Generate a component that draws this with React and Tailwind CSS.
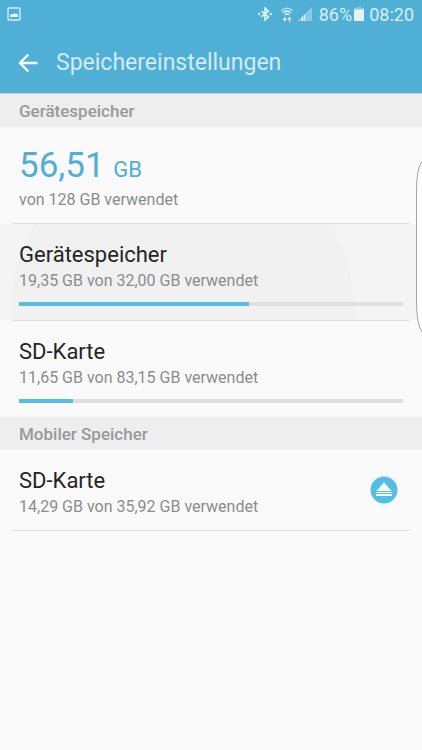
import { useState } from "react";

const INTERNAL = [
  { id: "device", name: "Gerätespeicher", detail: "19,35 GB von 32,00 GB verwendet", percent: 60 },
  { id: "sd", name: "SD-Karte", detail: "11,65 GB von 83,15 GB verwendet", percent: 14 },
];

const PictureIcon = () => (
  <svg width="14" height="14" viewBox="0 0 14 14" fill="none" aria-hidden="true">
    <rect x="1" y="1" width="12" height="12" rx="1" stroke="#d3ebf5" strokeWidth="1.4"/>
    <path d="M3 10V8l1.500-1 1 .5L7 6l1.500 1L10 6.500 11 8v2z" fill="#e6f4fa"/>
  </svg>
);

const BluetoothIcon = () => (
  <svg width="14" height="14" viewBox="0 0 14 14" fill="none" aria-hidden="true">
    <path d="M3.4 4.2l7 5.6L7 13V1l3.4 3.2-7 5.6" stroke="#e2f2f9" strokeWidth="1.6"/>
    <circle cx="1.2" cy="7" r="1.2" fill="#d8eef7"/>
    <circle cx="12.8" cy="7" r="1.2" fill="#d8eef7"/>
  </svg>
);

const WifiIcon = () => (
  <svg width="14" height="15" viewBox="0 0 14 15" fill="none" aria-hidden="true">
    <path d="M1.2 3.8Q7-1.4 12.8 3.8" stroke="#b4ddec" strokeWidth="1.4"/>
    <path d="M3 5.8Q7 2.4 11 5.8M4.9 7.8Q7 6.2 9.1 7.8" stroke="#e2f2f9" strokeWidth="1.6"/>
    <path d="M2.500 11.800h4.500L4.800 14.500zM4 10h1.600v2.500H4zM7.200 12.600h4.500l-2.200-2.800zM8.700 12h1.600v2.500H8.700z" fill="#e2f2f9"/>
  </svg>
);

const SignalIcon = () => (
  <svg width="14" height="14" viewBox="0 0 14 14" aria-hidden="true">
    <path d="M7 14V7l7-7v14z" fill="#8ccae3"/>
    <path d="M0 14l2-2v2zM3 14v-3l2-2v5zM5.500 14V8.500L7 7v7z" fill="#e2f2f9"/>
  </svg>
);

const BatteryIcon = () => (
  <svg width="10" height="14" viewBox="0 0 10 14" aria-hidden="true">
    <path d="M3 0h4v1h3v2H0V1h3z" fill="#8ccae3"/>
    <path d="M0 2.500h10V14H0z" fill="#e4f3f9"/>
  </svg>
);

const BackIcon = () => (
  <svg width="20" height="20" viewBox="0 0 20 20" fill="none" stroke="#fff" strokeWidth="2.4" aria-hidden="true">
    <path d="M10.300 1.500L2 10l8.300 8.500M2 10h17.500"/>
  </svg>
);

const EjectIcon = () => (
  <svg className="block" width="28" height="28" viewBox="0 0 28 28" aria-hidden="true">
    <circle cx="14" cy="14" r="13.500" fill="#54bfe4"/>
    <path d="M14 6.500l7.500 8.500h-15zM6 16h16v1H6zM6 18h16v2H6z" fill="#fff"/>
  </svg>
);

const SectionHeader = ({ children }) => (
  <h2 className="bg-[#eeeeee] px-[19px] pt-[5px] pb-1 text-[17px] leading-6 font-medium text-[#999999]">{children}</h2>
);

const Divider = () => <div className="mx-3 h-px bg-[#e0e0e0]"/>;

const VolumeText = ({ name, detail }) => (
  <>
    <span className="block text-[22px] leading-7 text-[#252525]">{name}</span>
    <span className="block text-[16px] leading-6 text-[#8a8c8d]">{detail}</span>
  </>
);

const VolumeRow = ({ volume, pressed, onPress }) => (
  <button
    type="button"
    onClick={onPress}
    className={`relative block w-full overflow-hidden px-[19px] pt-[17px] pb-[14px] text-left ${pressed ? "bg-[#f4f4f4]" : ""}`}
  >
    {pressed && <span className="absolute -top-[86px] left-3 size-[342px] rounded-full bg-[#f1f1f1]"/>}
    <span className="relative block">
      <VolumeText name={volume.name} detail={volume.detail}/>
      <span className="mt-[9px] block h-1 bg-[#e0dedf]">
        <span className="block h-1 bg-[#54bfe4]" style={{ width: `${volume.percent}%` }}/>
      </span>
    </span>
  </button>
);

export default function App() {
  const [pressed, setPressed] = useState("device");

  return (
    <div className="relative min-h-screen bg-[#fafafa] font-[Roboto,sans-serif]">
      <header className="border-b border-[#c5cdd0] bg-[#50afd5]">
        <div className="flex h-7 items-center justify-between pr-2 pl-[7px] text-[18px] text-[#d8eef7]">
          <PictureIcon/>
          <div className="flex items-center">
            <span className="mr-2"><BluetoothIcon/></span>
            <span className="mr-1"><WifiIcon/></span>
            <span className="mr-[7px]"><SignalIcon/></span>
            <span className="mr-0.5">86%</span>
            <span className="mr-[5px]"><BatteryIcon/></span>
            <span>08:20</span>
          </div>
        </div>
        <div className="flex h-[65px] items-center pt-1 pl-[18px]">
          <button type="button" aria-label="Zurück"><BackIcon/></button>
          <h1 className="ml-[18px] text-[23px] leading-8 text-[#d3ebf5]">Speichereinstellungen</h1>
        </div>
      </header>

      <main>
        <SectionHeader>Gerätespeicher</SectionHeader>
        <div className="px-[19px] pt-[21px] pb-[11px]">
          <div className="text-[35px] leading-9 text-[#50afd5]">
            56,51 <span className="text-[22px]">GB</span>
          </div>
          <div className="text-[16px] leading-6 text-[#8a8c8d]">von 128 GB verwendet</div>
        </div>
        <Divider/>
        <VolumeRow volume={INTERNAL[0]} pressed={pressed === "device"} onPress={() => setPressed("device")}/>
        <Divider/>
        <VolumeRow volume={INTERNAL[1]} pressed={pressed === "sd"} onPress={() => setPressed("sd")}/>

        <SectionHeader>Mobiler Speicher</SectionHeader>
        <div className="flex items-center justify-between pr-6 pl-[19px]">
          <div className="pt-[17px] pb-[11px]"><VolumeText name="SD-Karte" detail="14,29 GB von 35,92 GB verwendet"/></div>
          <button type="button" aria-label="SD-Karte auswerfen"><EjectIcon/></button>
        </div>
        <Divider/>
      </main>

      {/* edge panel handle */}
      <svg className="absolute top-[160px] right-0" width="6" height="173" viewBox="0 0 6 173" aria-hidden="true">
        <path d="M6 1.500Q.5 8 .5 32v109Q.5 165 6 171.500" fill="#fdfdfd" stroke="#a3a3a3"/>
      </svg>
    </div>
  );
}
